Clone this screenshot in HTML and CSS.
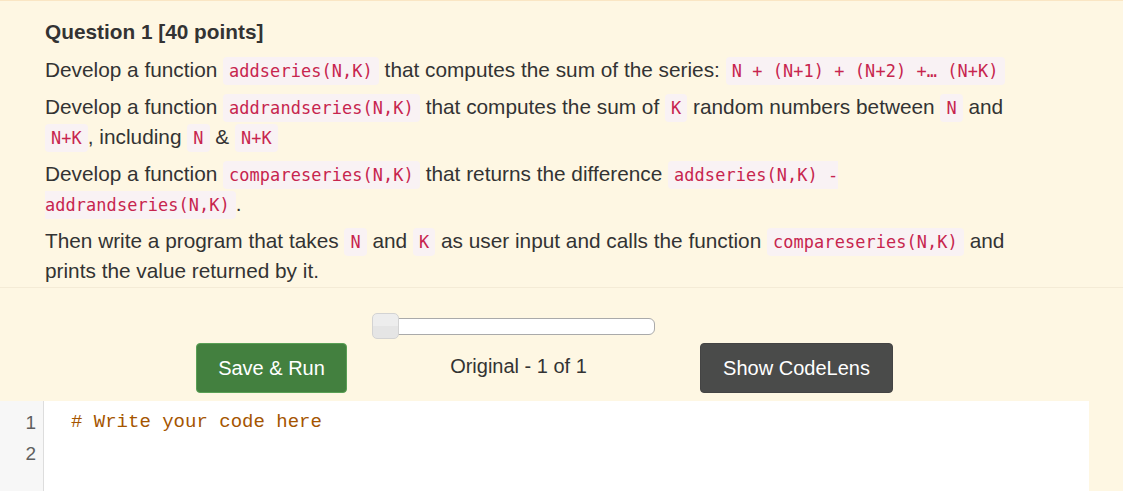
FILE: index.html
```html
<!DOCTYPE html>
<html>
<head>
<meta charset="utf-8">
<link rel="stylesheet" href="styles.css">
</head>
<body>
<div class="page">
  <div class="question">
    <h2 class="title">Question 1 [40 points]</h2>
    <p>Develop a function <code>addseries(N,K)</code> that computes the sum of the series: <code>N + (N+1) + (N+2) +… (N+K)</code></p>
    <p>Develop a function <code>addrandseries(N,K)</code> that computes the sum of <code>K</code> random numbers between <code>N</code> and <code>N+K</code>, including <code>N</code> &amp; <code>N+K</code></p>
    <p>Develop a function <code>compareseries(N,K)</code> that returns the difference <code>addseries(N,K) - addrandseries(N,K)</code>.</p>
    <p class="last">Then write a program that takes <code>N</code> and <code>K</code> as user input and calls the function <code>compareseries(N,K)</code> and prints the value returned by it.</p>
  </div>
  <div class="rule"></div>
  <div class="controls">
    <button class="btn btn-run">Save &amp; Run</button>
    <div class="history">
      <div class="slider"><span class="handle"></span></div>
      <div class="version">Original - 1 of 1</div>
    </div>
    <button class="btn btn-lens">Show CodeLens</button>
  </div>
  <div class="editor">
    <div class="gutter">
      <div class="ln">1</div>
      <div class="ln">2</div>
    </div>
    <div class="code">
      <div class="line"><span class="comment"># Write your code here</span></div>
      <div class="line">&nbsp;</div>
    </div>
  </div>
</div>
</body>
</html>
```
FILE: styles.css
```css
html, body {
  margin: 0;
  padding: 0;
  height: 100%;
}
body {
  background: #fef7e3;
  font-family: "Liberation Sans", Arial, sans-serif;
  color: #333;
  overflow: hidden;
}
.page {
  border-top: 1px solid #fae6c4;
  min-height: 100%;
}
.question {
  width: 1089px;
  box-sizing: border-box;
  padding: 16px 66px 0 45px;
  font-size: 20.8px;
  line-height: 30px;
}
.title {
  margin: 0 0 8px;
  font-size: 20.8px;
  line-height: 30px;
  font-weight: bold;
}
.question p {
  margin: 0 0 7px;
}
.question p.last {
  margin-bottom: 1px;
}
code {
  font-family: "DejaVu Sans Mono", "Liberation Mono", monospace;
  font-size: 16.9px;
  line-height: 18px;
  color: #c7254e;
  background: #f9f2f4;
  padding: 4px 6px;
  border-radius: 4px;
  letter-spacing: 0.1px;
}
.rule {
  height: 1px;
  background: #f4ebd6;
}
.controls {
  width: 1089px;
  display: flex;
  justify-content: center;
  align-items: flex-end;
  padding-top: 25px;
}
.btn {
  font-family: "Liberation Sans", Arial, sans-serif;
  font-size: 20px;
  color: #fff;
  height: 50px;
  border-radius: 4px;
  padding: 0;
  cursor: pointer;
}
.btn-run {
  width: 151px;
  background: #43803f;
  border: 1px solid #5aa056;
}
.btn-lens {
  width: 193px;
  background: #4a4b4a;
  border: 1px solid #444;
}
.history {
  width: 283px;
  margin: 0 45px 0 25px;
  display: flex;
  flex-direction: column;
}
.slider {
  position: relative;
  height: 17px;
  margin-top: 5px;
  border: 1px solid #aaa;
  border-radius: 6px;
  background: #fff;
  box-sizing: border-box;
}
.handle {
  position: absolute;
  left: -1px;
  top: -6px;
  width: 27px;
  height: 26px;
  box-sizing: border-box;
  border: 1px solid #d3d3d3;
  border-radius: 5px;
  background: linear-gradient(#ededed 50%, #e5e5e5 50%);
}
.version {
  height: 50px;
  margin-top: 8px;
  line-height: 46px;
  text-align: center;
  font-size: 20px;
  padding-left: 10px;
}
.editor {
  width: 1089px;
  margin-top: 8px;
  background: #fff;
  display: flex;
  height: 200px;
}
.gutter {
  width: 44px;
  background: #f7f7f7;
  border-right: 1px solid #ddd;
  padding-top: 6px;
  box-sizing: border-box;
}
.ln {
  height: 31px;
  line-height: 31px;
  text-align: right;
  padding-right: 7px;
  font-family: "Liberation Sans", Arial, sans-serif;
  font-size: 19px;
  color: #5f5f5f;
}
.code {
  padding: 6px 0 0 27px;
}
.line {
  height: 31px;
  line-height: 31px;
  font-family: "Liberation Mono", "Courier New", monospace;
  font-size: 19px;
  white-space: pre;
}
.comment {
  color: #a55500;
}
```
